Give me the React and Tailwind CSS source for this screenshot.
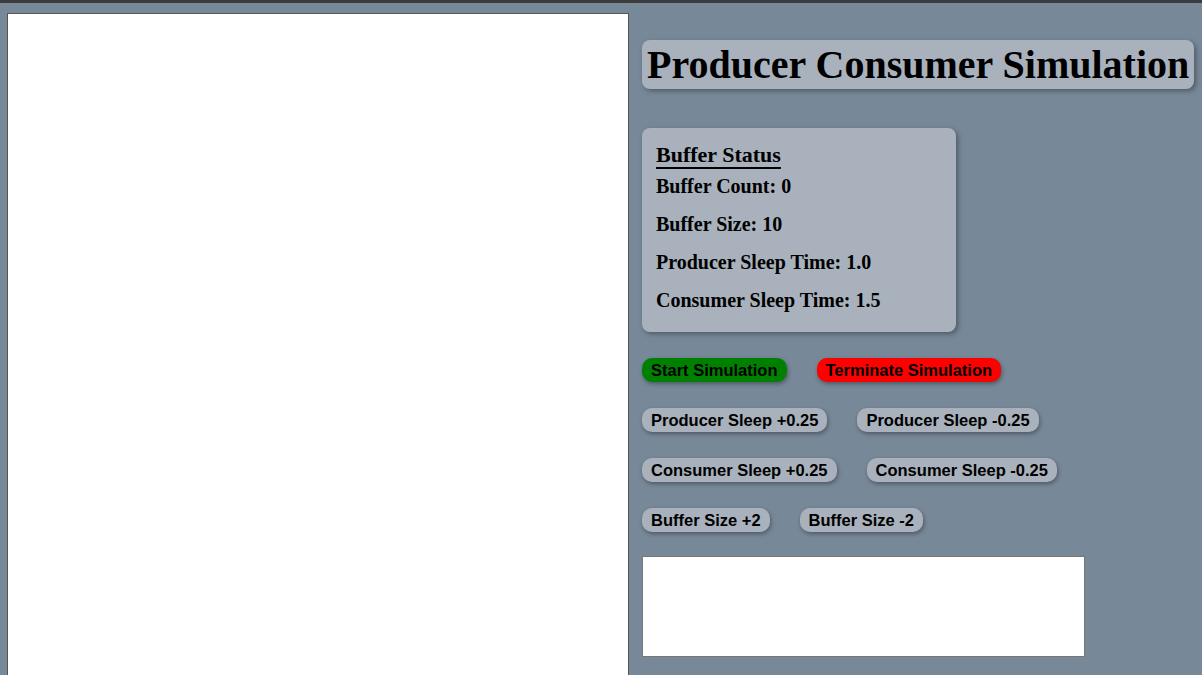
const times = { fontFamily: '"Liberation Serif", "Times New Roman", serif' };
const arial = { fontFamily: '"Liberation Sans", Arial, sans-serif' };

const STATUS = [
  'Buffer Count: 0',
  'Buffer Size: 10',
  'Producer Sleep Time: 1.0',
  'Consumer Sleep Time: 1.5',
];

const ROWS = [
  [
    { label: 'Start Simulation', cls: 'bg-[#008000]' },
    { label: 'Terminate Simulation', cls: 'bg-[#ff0000]' },
  ],
  [
    { label: 'Producer Sleep +0.25', cls: 'bg-[#a9b2bc]' },
    { label: 'Producer Sleep -0.25', cls: 'bg-[#a9b2bc]' },
  ],
  [
    { label: 'Consumer Sleep +0.25', cls: 'bg-[#a9b2bc]' },
    { label: 'Consumer Sleep -0.25', cls: 'bg-[#a9b2bc]' },
  ],
  [
    { label: 'Buffer Size +2', cls: 'bg-[#a9b2bc]' },
    { label: 'Buffer Size -2', cls: 'bg-[#a9b2bc]' },
  ],
];

const App = () => {
  return (
    <div className="h-[675px] overflow-hidden bg-[#778899]">
      {/* top strip */}
      <div className="h-[3px] bg-[#3c3c3c]" />

      <div className="flex items-start pl-[7px] pt-[10px]">
        {/* canvas */}
        <div className="w-[622px] h-[700px] shrink-0 bg-white border border-[#555]" />

        {/* controls */}
        <div className="ml-[13px] mt-[27px] flex flex-col items-start">
          <div
            className="h-[49px] flex items-center px-[5px] rounded-[8px] bg-[#a9b2bc] shadow-[2px_2px_5px_rgba(0,0,0,0.35)]"
            style={times}
          >
            <h1 className="text-[40px] font-bold text-black leading-none whitespace-nowrap">
              Producer Consumer Simulation
            </h1>
          </div>

          <div
            className="mt-[39px] w-[314px] h-[204px] pt-[15px] pl-[14px] rounded-[8px] bg-[#a9b2bc] shadow-[2px_2px_5px_rgba(0,0,0,0.35)] text-black"
            style={times}
          >
            <h2 className="text-[22px] leading-[24px] font-bold underline decoration-2 underline-offset-[5px]">
              Buffer Status
            </h2>
            {STATUS.map((s) => (
              <p key={s} className="text-[20px] leading-[38px] font-bold">{s}</p>
            ))}
          </div>

          <div className="mt-[26px] flex flex-col gap-[26px]" style={arial}>
            {ROWS.map((row, i) => (
              <div key={i} className="flex gap-[30px]">
                {row.map((b) => (
                  <button
                    key={b.label}
                    className={`h-[24px] px-[9px] pb-[1px] rounded-[10px] text-[16.5px] font-bold text-black shadow-[1px_2px_4px_rgba(0,0,0,0.35)] ${b.cls}`}
                  >
                    {b.label}
                  </button>
                ))}
              </div>
            ))}
          </div>

          <div className="mt-[24px] w-[443px] h-[101px] bg-white border border-[#777]" />
        </div>
      </div>
    </div>
  );
};

export default App;
